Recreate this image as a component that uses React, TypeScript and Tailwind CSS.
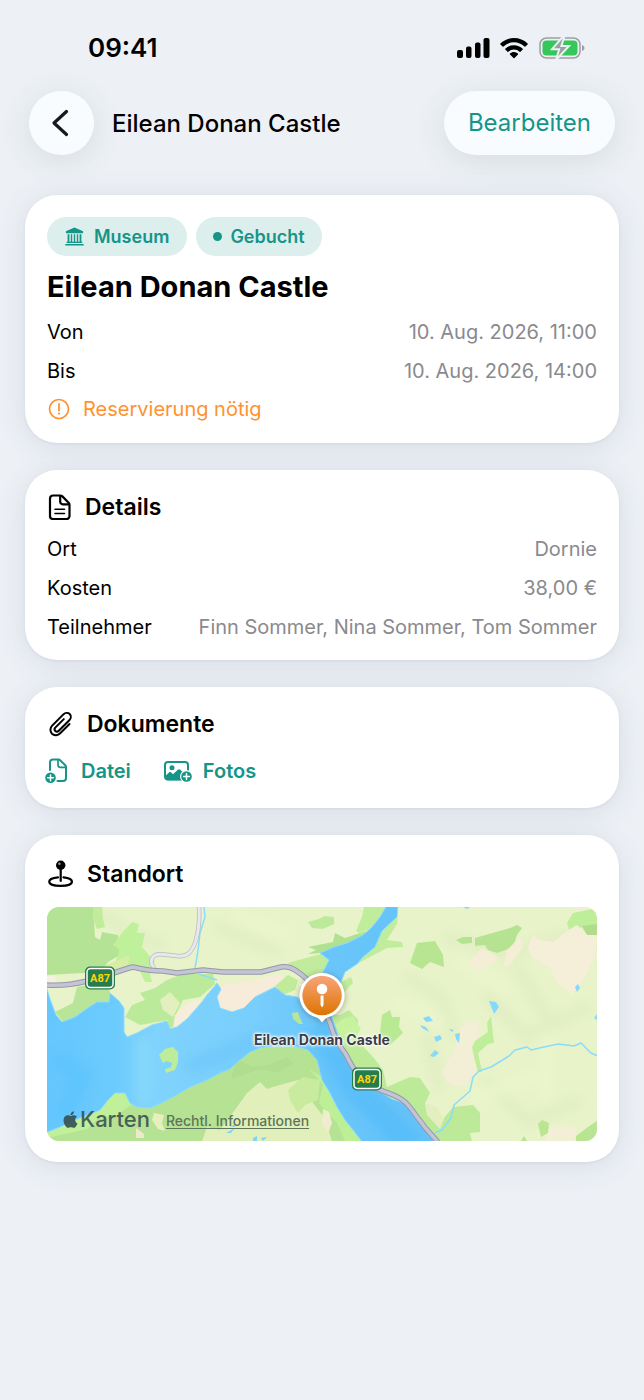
import type { ReactNode } from "react";
import { FaApple } from "react-icons/fa";

function Card({ className, children }: { className: string; children: ReactNode }) {
  return (
    <section
      className={`rounded-[32px] bg-white px-[22px] shadow-[0_4px_30px_rgba(70,80,100,0.12),0_1px_3px_rgba(110,140,190,0.14)] ${className}`}
    >
      {children}
    </section>
  );
}

function CardTitle({ icon, children }: { icon: ReactNode; children: ReactNode }) {
  return (
    <h2 className="flex h-[30px] items-center gap-3 text-[23px] font-semibold">
      {icon}
      {children}
    </h2>
  );
}

function Row({ label, value }: { label: string; value: string }) {
  return (
    <div className="flex h-[39px] items-center justify-between gap-4">
      <dt>{label}</dt>
      <dd className="text-right text-[#8a8a8e]">{value}</dd>
    </div>
  );
}

function StatusBar() {
  return (
    <div className="flex h-[91px] items-center justify-between pt-1 pr-[59px] pl-[88px]">
      <time className="text-[26px] font-semibold">09:41</time>
      <div className="flex items-center gap-[9px]">
        <svg width="34" height="22" viewBox="0 0 34 22" aria-hidden="true">
          <rect x="0" y="13" width="6" height="8" rx="2" />
          <rect x="9" y="9.500" width="5.500" height="11.500" rx="2" />
          <rect x="18" y="5.500" width="5.500" height="15.500" rx="2" />
          <rect x="26.500" y="1" width="6" height="20" rx="2" />
        </svg>
        <svg width="28" height="22" viewBox="0 0 28 22" aria-hidden="true">
          <path d="M14 1C8.700 1 3.900 3.100.4 6.500a.6.6 0 0 0 0 .9L2.600 9.500a.6.6 0 0 0 .9 0A15.200 15.200 0 0 1 14 5.300c4 0 7.700 1.600 10.500 4.200a.6.6 0 0 0 .9 0l2.200-2.100a.6.6 0 0 0 0-.9A19.600 19.600 0 0 0 14 1Z" />
          <path d="M14 8.200a12.500 12.500 0 0 0-8.700 3.500.6.6 0 0 0 0 .9l2.200 2.100a.6.6 0 0 0 .9 0 8.200 8.200 0 0 1 11.200 0 .6.6 0 0 0 .9 0l2.200-2.100a.6.6 0 0 0 0-.9A12.500 12.500 0 0 0 14 8.200Z" />
          <path d="M14 14.900c-1.600 0-3 .6-4 1.600a.6.6 0 0 0 0 .9l3.500 3.500a.7.700 0 0 0 1 0l3.500-3.500a.6.6 0 0 0 0-.9 5.800 5.800 0 0 0-4-1.600Z" />
        </svg>
        <svg className="ml-[2px]" width="46" height="22" viewBox="0 0 46 22" fill="none" aria-hidden="true">
          <rect x="1" y="1" width="40" height="20" rx="6.500" stroke="#9d9fa3" strokeWidth="1.500" />
          <path d="M43 8c3.300.9 3.300 5.200 0 6Z" fill="#9d9fa3" />
          <rect x="3.500" y="3.500" width="35" height="15" rx="4" fill="#35c759" />
          <path
            d="M24.500-1 13 12.200h7.200L17 23l13-14h-7.600L25.500-1Z"
            fill="#9d9fa3"
            stroke="#edf1f6"
            strokeWidth="2"
          />
        </svg>
      </div>
    </div>
  );
}

function MuseumIcon() {
  return (
    <svg width="19" height="19" viewBox="0 0 19 19" fill="currentColor" aria-hidden="true">
      <path d="M9.500.4.9 4.200v2h17.200v-2L9.500.4Z" />
      <path d="M2.600 7.200h1.800v7.800H2.600zM5.800 7.200h1.400v7.800H5.800zM8.800 7.200h1.400v7.800H8.800zM11.800 7.200h1.400v7.800h-1.400zM14.600 7.200h1.800v7.800h-1.800z" />
      <path d="M1.700 14.800h15.600V16H1.700zM.3 17h18.400v1.600H.3z" />
    </svg>
  );
}

function WarningIcon() {
  return (
    <svg width="24" height="24" viewBox="0 0 24 24" fill="none" stroke="currentColor" aria-hidden="true">
      <circle cx="12" cy="12" r="9.500" strokeWidth="1.700" />
      <path d="M12 7v6.500" strokeWidth="1.800" strokeLinecap="round" />
      <circle cx="12" cy="16.600" r="1.100" fill="currentColor" stroke="none" />
    </svg>
  );
}

function DocumentIcon() {
  return (
    <svg width="26" height="26" viewBox="0 0 26 26" fill="none" stroke="currentColor" strokeWidth="2.200" strokeLinejoin="round" aria-hidden="true">
      <path d="M6 1.500h7.200c.9 0 1.600.3 2.200.9l6.200 6.300c.6.6.9 1.300.9 2.200V22a3 3 0 0 1-3 3H6a3 3 0 0 1-3-3V4.500a3 3 0 0 1 3-3Z" />
      <path d="M13.200 1.800v6a2.500 2.500 0 0 0 2.500 2.500h6.500" />
      <path d="M8 15.200h9.500M8 19.500h9.500" strokeWidth="1.600" strokeLinecap="round" />
    </svg>
  );
}

function PaperclipIcon() {
  return (
    <svg width="28" height="28" viewBox="0 0 28 28" fill="none" stroke="currentColor" strokeWidth="2" strokeLinecap="round" aria-hidden="true">
      <path d="m22.500 14-9.300 9.300C11 25.500 7.300 26 5 23.800c-2.300-2.300-2-6 .2-8.200L16.400 4.400c1.700-1.700 4.600-2.100 6.300-.4s1.300 4.600-.4 6.300L11.800 20.800c-.9.900-2.500 1.200-3.500.2s-.8-2.600.2-3.600l8.300-8.300" />
    </svg>
  );
}

function PinBaseIcon() {
  return (
    <svg width="28" height="28" viewBox="0 0 28 28" fill="none" aria-hidden="true">
      <path d="M11 17.300c-5 .5-8.800 2.200-8.800 4.400 0 2.600 4.800 4.200 11.400 4.200S25 24.300 25 21.700c0-2.200-3.500-3.900-8.500-4.400" stroke="currentColor" strokeWidth="2.200" strokeLinecap="round" />
      <path d="M13.700 9v12" stroke="currentColor" strokeWidth="2.200" strokeLinecap="round" />
      <circle cx="13.700" cy="5.200" r="4.700" fill="currentColor" />
      <circle cx="12.400" cy="3.700" r="1.200" fill="#999" />
    </svg>
  );
}

function FileAddIcon() {
  return (
    <svg width="24" height="26" viewBox="0 0 24 26" fill="none" stroke="currentColor" strokeWidth="2" strokeLinejoin="round" strokeLinecap="round" aria-hidden="true">
      <path d="M5 12V4.500a3 3 0 0 1 3-3h5.500c.6 0 1.200.2 1.600.7l5.200 5.100c.5.500.7 1 .7 1.700V20a3 3 0 0 1-3 3h-5.500" />
      <path d="M13 2v5a2.300 2.300 0 0 0 2.300 2.300H20.500" strokeWidth="1.700" />
      <circle cx="5.500" cy="19.800" r="5.300" fill="currentColor" stroke="none" />
      <path d="M5.500 16.900v5.800M2.600 19.800h5.800" stroke="#fff" strokeWidth="1.500" />
    </svg>
  );
}

function PhotoAddIcon() {
  return (
    <svg width="30" height="24" viewBox="0 0 30 24" fill="none" aria-hidden="true">
      <rect x="2" y="3" width="23" height="17.500" rx="3" stroke="currentColor" strokeWidth="2" />
      <path d="M2 17.200 6 13.500c.7-.6 1.500-.6 2.200 0l1.800 1.700 4.800-4.500c.8-.7 1.700-.7 2.500 0l3.700 3.500-2 7H4Z" fill="currentColor" />
      <circle cx="9" cy="8.700" r="2.500" fill="currentColor" />
      <circle cx="23.500" cy="17.500" r="6.500" fill="#fff" />
      <circle cx="23.500" cy="17.500" r="5.300" fill="currentColor" />
      <path d="M23.500 14.600v5.800M20.600 17.500h5.800" stroke="#fff" strokeWidth="1.500" strokeLinecap="round" />
    </svg>
  );
}

function RoadSign({ x, y }: { x: number; y: number }) {
  return (
    <g transform={`translate(${x} ${y})`}>
      <rect x="-15" y="-11.500" width="30" height="23" rx="5" fill="#267c4b" />
      <rect x="-13" y="-9.500" width="26" height="19" rx="3.500" fill="#267c4b" stroke="#fff" strokeWidth="1.500" />
      <text y="4" textAnchor="middle" fill="#ffd60a" className="font-['Roboto',sans-serif] text-[11px] font-bold">
        A87
      </text>
    </g>
  );
}

const mainRoad =
  "M0 78c14 1 28-1 40-4 18-4 30-10 46-14 12 3 18 4 30 4l14 2 26-3 20 2h38l20-5c6-1 10 0 14 3 9 6 15 10 22 26l13 27c4 13 6 18 15 30 5 8 5 12 11 18 10 12 18 18 27 20 10 4 15 5 22 11 10 9 10 16 32 39";
const sideRoad =
  "M152 0c1 18-1 26-3 33-4 13-9 17-19 16-12-1-20-4-24 1-3 4-2 7 1 11";
const water =
  "M-2 82H0L3 92 6 100 9 108 15 115 28 110 42 100 50 95 62 95 63 86 72 94 77 101V125L80 130 90 126 105 118 120 114 123 122 130 120 140 112 148 103 155 95 160 88 167 80 170 76 174 82 170 90 173 101 185 105 197 101 208 90 228 80 238 88 250 90 258 95 270 80 276 65 282 53 273 46 287 40 300 36 316 28 325 20 333 10 340-2H351L350 10 335 24 328 40 316 50 310 57 298 65 294 75 288 95 285 110 290 125 298 146 306 160 320 177 335 186 345 192 360 197 368 206 376 218 388 236H316L306 223 298 213 290 200 283 186 275 173 270 153 261 143 246 139 226 139 213 141 203 145 193 153 183 162 173 166 160 173 143 180 126 190 110 198 103 201 90 200 83 196 78 186H68L61 193 53 203 33 211 13 220-2 226Z";

function MapArt() {
  return (
    <svg className="absolute inset-0 h-full w-full" viewBox="0 0 550 234" preserveAspectRatio="xMidYMid slice" aria-hidden="true">
      <defs>
        <linearGradient id="water" x1="0" y1="0" x2="550" y2="0" gradientUnits="userSpaceOnUse">
          <stop offset="0" stopColor="#65c7fd" />
          <stop offset=".12" stopColor="#6ccbfd" />
          <stop offset=".2" stopColor="#7fd3fc" />
          <stop offset=".38" stopColor="#78cefc" />
          <stop offset=".5" stopColor="#6ac6fa" />
          <stop offset="1" stopColor="#5abdf8" />
        </linearGradient>
        <filter id="soft" x="-30%" y="-30%" width="160%" height="160%">
          <feGaussianBlur stdDeviation="6" />
        </filter>
        <clipPath id="loch">
          <path d={water} />
        </clipPath>
      </defs>
      <rect width="550" height="234" fill="#e8f3c9" />

      {/* hill shading */}
      <g filter="url(#soft)" fill="none" strokeLinecap="round">
        <path d="M55 8c25 12 30 25 60 28M170 20l60 25M360 70l35 20 10 35M400 30l60 18 60-20M440 90l40 40 60-30M380 130l12 50M440 175l40 40 50-20M470 60l30 50" stroke="#dae7ba" strokeWidth="10" opacity=".6" />
        <path d="M190 8l50 20M350 95l45 20M415 55l45 28M430 190l60-20M500 130v60" stroke="#eef8cf" strokeWidth="10" opacity=".8" />
      </g>

      {/* north shore */}
      <path d="M0 0H46L48 30 53 33 55 25 71 28 73 48 61 55 55 65 36 66 0 68Z" fill="#b5e395" />
      <path d="M46 0H55L56 12 58 20 50 22 46 12Z" fill="#c0ec9c" />
      <path d="M85 15 92 17 90 26 98 26 95 40 108 55 102 62 105 75 98 75 92 62 80 60 68 55 73 43 66 38 75 26Z" fill="#bff09a" />
      <path d="M56 60 66 55 83 48 80 60 62 68Z" fill="#d7eda7" />
      <path d="M8 105 16 115 28 110 42 100 50 95 62 95 63 84 55 76 30 80 26 96Z" fill="#b8e598" />
      <path d="M0 69H8L9 74 0 76Z" fill="#f7efe0" />
      <path d="M120 73 136 67H166L168 77 153 90 136 93 128 110V120L121 121V113L93 118 78 110 85 98 98 93 93 86 108 81Z" fill="#bbeb9a" />
      <path d="M113 93 123 85 133 96 126 110 116 103Z" fill="#e4efbf" />
      <path d="M126 121 128 108 140 96 155 92 146 105 135 118Z" fill="#f6eeda" />
      <path d="M173 101 168 90 173 79 206 73 233 67 236 72 228 80 208 91 197 101 185 105Z" fill="#f6ecd9" />
      <path d="M228 79 241 68 251 73 248 83 236 88Z" fill="#c0ec9a" />
      <path d="M241 56 281 45 283 55 276 65 266 70 256 72 251 65Z" fill="#c2ec9d" />
      <path d="M252 77 261 76 262 84 256 83Z" fill="#fff8eb" />
      <path d="M261 15 272 12 278 9 287 10V17L276 22 265 21Z" fill="#bdea9a" />
      <path d="M261 40 286 35 288 26 298 31 316 25 326 26 318 33 296 41 273 46 261 47 269 43Z" fill="#b0e191" />
      <path d="M317 0H341L325 20 314 27 309 24 315 10Z" fill="#c0ed9c" />
      <path d="M351 10 350 17 340 33 355 35 356 40 340 41 323 50 308 58 328 36 336 23Z" fill="#c0ed9c" />
      <path d="M294 75 304 70 306 76 298 84 290 96Z" fill="#c0ed9c" />

      {/* south shore */}
      <path d="M0 200 100 180 180 140H270L330 234H0Z" fill="#b6e294" />
      <path d="M50 180H84V198L70 208 50 212 40 222 0 231V216Z" fill="#c1f09a" />
      <path d="M155 234 160 220 173 223 190 200 200 186 213 175 220 182 226 180 240 176 256 172 266 196 277 210 285 234Z" fill="#e1f0ba" />
      <path d="M241 183 256 170 273 173 271 193 258 198 251 206 243 193Z" fill="#c8eb9e" />
      <path d="M107 206 117 208 115 216 118 224 111 222 105 213Z" fill="#e7efbd" />
      <path d="M89 221 97 227V231H89Z" fill="#efe9cc" />
      <path d="M262 162 276 170 292 200 316 234H298L290 216 272 196 276 178Z" fill="#bdf096" />
      <path d="M276 202 282 205 285 216 281 226 275 217Z" fill="#f0ecd0" />
      <path d="M183 219 190 217 187 220ZM179 226 188 221 184 226ZM206 231 210 229V234H206ZM214 231 220 230 216 234Z" fill="#7dd3fb" />
      <path d="M190 152 205 160 222 158 240 150 246 156 232 165 212 162 196 168 184 172Z" fill="#a9d88a" opacity=".5" />

      {/* woods east of the road */}
      <path d="M284 108 293 108 302 103 311 113 310 133 326 150 336 163 340 180 363 170 373 171 383 186 378 196 380 206 393 216 406 200 426 198 433 206V225L423 226 425 234H388L376 218 355 196 330 184 300 150Z" fill="#bdea99" />
      <path d="M296 112 306 109 314 122 306 133 294 128 288 118Z" fill="#c7f39e" />
      <path d="M378 196 390 200 397 212 393 222 380 208Z" fill="#e4efbf" />

      {/* loch and river mouth */}
      <path d={water} fill="url(#water)" stroke="#8adbfd" strokeWidth="1" />
      <g clipPath="url(#loch)">
        <g filter="url(#soft)" fill="none" opacity=".5">
          <path d="M96 130v70" stroke="#97defc" strokeWidth="16" />
          <path d="M140 160l40-14 50-20" stroke="#66c3f8" strokeWidth="14" />
          <path d="M272 120l34 60 60 60" stroke="#4eb8f8" strokeWidth="24" />
          <path d="M10 150l25 20-20 40" stroke="#56c0fc" strokeWidth="18" />
        </g>
      </g>
      <path d="M112 148 118 142 126 140 131 145V155L128 163 119 166 118 162 124 160 125 156 120 154 116 156Z" fill="#bdec9b" />
      <path d="M245 106 251 105 253 111 256 117 252 117 246 112Z" fill="#b7e694" />

      {/* eastern hills */}
      <path d="M335 108 343 103 345 110H353L352 120 356 126 343 138 333 132V126Z" fill="#b9e993" />
      <path d="M363 56 370 36 388 34 396 48 397 60 383 55 375 62Z" fill="#b7e591" />
      <path d="M409 33 416 30H425V36L415 37Z" fill="#b5e392" />
      <path d="M428 31 463 21 470 18 475 21 470 28 466 40 450 46 441 43 438 38 428 39Z" fill="#b5e392" />
      <path d="M520 16 526 6 550 1V30L540 28 535 20 523 26Z" fill="#bfee9a" />
      <path d="M535 19 550 17V30L540 28Z" fill="#b0dc8c" />
      <path d="M483 48 481 40 486 28 492 33 506 35 520 24 530 18 540 28H550L548 50 536 73 525 88 510 76 503 61 486 51Z" fill="#f5efda" />
      <path d="M421 56 435 41 444 46 451 51 450 55 440 58 431 66Z" fill="#f3eed5" />
      <path d="M456 60 460 43 473 30 476 40 463 58Z" fill="#f3eed5" />
      <path d="M413 121 421 114 431 115 433 126 426 140 430 163 420 178 410 180 400 175 395 165 401 153 408 143Z" fill="#f3eed6" />
      <path d="M425 140 428 134 441 125 440 116 444 109 447 136 441 137 431 146 435 165H431L427 150Z" fill="#bfee9a" />
      <path d="M491 217 495 213 502 216 501 226 494 230Z" fill="#b9e692" />
      <path d="M503 220 512 218 526 220 530 228 524 234H498Z" fill="#f3eed6" />
      <path d="M529 229 541 220 550 214V234H529ZM474 234 477 229 480 234Z" fill="#b7e592" />
      <path d="M525 0H550L535 3Z" fill="#f5ecd8" />

      <g fill="#84d9fd">
        <path d="m376 111 6-2 4 5-7 1ZM373 118l6 2 3 5-7-4ZM387 130l6-2 2 4-6 3ZM383 149l5-6 4 3-5 4ZM408 127l5-1-1 10-3-4ZM402 122l5 1-2 2ZM442 94l7 1 3 5-5 7ZM528 80l3-3 2 4-3 4ZM416 0h7l-3 2ZM547 111l3-4v6Z" />
      </g>
      <g fill="none" stroke="#8bdcfa" strokeLinejoin="round">
        <path d="M157 0l1 10-5 16-2 18-3 17M152 67l18 6" strokeWidth="1.500" />
        <path d="M388 226l7-3 9-12 3-13 16-14 3-14 6-6 12-4 10-6 8-5 6-6 12-3 4 3 13-3 14-3 16 2 7-3 10 10 9 4 8 6" strokeWidth="1.500" />
      </g>

      <g fill="none" strokeLinecap="round" strokeLinejoin="round">
        <path d={sideRoad} stroke="#b9bac4" strokeWidth="4.500" />
        <path d={sideRoad} stroke="#e7e8ec" strokeWidth="3" />
        <path d={mainRoad} stroke="#9698a8" strokeWidth="5.500" />
        <path d={mainRoad} stroke="#c3c5d5" strokeWidth="3.500" />
      </g>
      <RoadSign x={53} y={71} />
      <RoadSign x={320} y={172} />
    </svg>
  );
}

function MapPin() {
  return (
    <svg width="50" height="54" viewBox="0 0 50 54" className="drop-shadow-[0_1px_3px_rgba(60,60,60,0.4)]" aria-hidden="true">
      <defs>
        <linearGradient id="pin" x1="0" y1="0" x2="0" y2="1">
          <stop offset="0" stopColor="#f8a57a" />
          <stop offset="1" stopColor="#de7400" />
        </linearGradient>
      </defs>
      <path d="M25 2a22.500 22.500 0 0 0-6 44.200c2.500.7 3.500 2.300 6 5.300 2.500-3 3.500-4.600 6-5.300A22.500 22.500 0 0 0 25 2Z" fill="#fff" />
      <circle cx="25" cy="24.500" r="19.700" fill="url(#pin)" />
      <circle cx="25" cy="18" r="5.300" fill="#fff" />
      <path d="M23.500 24.500h3V34l-1.500 2.500-1.500-2.500Z" fill="#fff" />
    </svg>
  );
}

export default function App() {
  return (
    <main className="min-h-screen bg-[#edf1f6] font-['Inter',sans-serif] text-black">
      <StatusBar />

      <header className="flex items-center gap-[18px] px-[29px]">
        <button
          type="button"
          aria-label="Zurück"
          className="flex h-16 w-[65px] shrink-0 items-center justify-center rounded-full bg-[#f9fcff] pr-[2px] shadow-[0_6px_32px_rgba(60,75,75,0.12)]"
        >
          <svg width="22" height="30" viewBox="0 0 22 30" fill="none" stroke="#16191d" strokeWidth="3.200" strokeLinecap="round" strokeLinejoin="round" aria-hidden="true">
            <path d="M16.500 3.500 4 15l12.500 11.500" />
          </svg>
        </button>
        <h1 className="flex-1 pt-[2px] text-2xl font-medium">Eilean Donan Castle</h1>
        <button
          type="button"
          className="h-16 shrink-0 rounded-full bg-[#f9fcff] px-6 text-2xl text-[#159588] shadow-[0_6px_32px_rgba(60,75,75,0.12)]"
        >
          Bearbeiten
        </button>
      </header>

      <div className="flex flex-col gap-[27px] px-[25px] pt-10 pb-12 text-xl">
        <Card className="pt-[22px] pb-[15px]">
          <div className="flex gap-[9px] text-lg font-semibold text-[#159588]">
            <span className="flex h-[39px] items-center gap-[10px] rounded-full bg-[#dcefed] px-[18px]">
              <MuseumIcon />
              Museum
            </span>
            <span className="flex h-[39px] items-center gap-2 rounded-full bg-[#dcefed] px-[17px]">
              <span className="size-[9px] rounded-full bg-[#159588]" />
              Gebucht
            </span>
          </div>
          <h2 className="flex h-14 items-center pt-[7px] text-[29px] font-bold">Eilean Donan Castle</h2>
          <dl>
            <Row label="Von" value="10. Aug. 2026, 11:00" />
            <Row label="Bis" value="10. Aug. 2026, 14:00" />
          </dl>
          <p className="flex h-[38px] items-center gap-3 text-[#ff9230]">
            <WarningIcon />
            Reservierung nötig
          </p>
        </Card>

        <Card className="pt-[22px] pb-[14px]">
          <CardTitle icon={<DocumentIcon />}>Details</CardTitle>
          <dl className="pt-[7px]">
            <Row label="Ort" value="Dornie" />
            <Row label="Kosten" value="38,00 €" />
            <Row label="Teilnehmer" value="Finn Sommer, Nina Sommer, Tom Sommer" />
          </dl>
        </Card>

        <Card className="pt-[22px] pb-[17px]">
          <CardTitle icon={<PaperclipIcon />}>Dokumente</CardTitle>
          <div className="flex gap-8 pt-3 font-semibold text-[#159588]">
            <button type="button" className="-ml-[2px] flex h-10 items-center gap-3">
              <FileAddIcon />
              Datei
            </button>
            <button type="button" className="flex h-10 items-center gap-[10px]">
              <PhotoAddIcon />
              Fotos
            </button>
          </div>
        </Card>

        <Card className="pt-6 pb-[21px]">
          <CardTitle icon={<PinBaseIcon />}>Standort</CardTitle>
          <div className="relative mt-[18px] h-[234px] overflow-hidden rounded-xl">
            <MapArt />
            <div className="absolute top-[64px] left-1/2 flex -translate-x-1/2 flex-col items-center">
              <MapPin />
              <span className="mt-[5px] text-sm font-bold whitespace-nowrap text-[#3b3d45] [text-shadow:0_0_2px_#fff,0_0_2px_#fff,0_0_3px_#fff,0_0_4px_#fff]">
                Eilean Donan Castle
              </span>
            </div>
            <div className="absolute bottom-[6px] left-[14px] flex items-center gap-4">
              <span className="flex items-center text-[22px] font-medium text-[#354f50]/90">
                <FaApple className="size-[19px]" aria-hidden="true" />
                Karten
              </span>
              <a href="#rechtliches" className="pt-[2px] text-sm font-medium text-[#5d7558] underline underline-offset-2">
                Rechtl. Informationen
              </a>
            </div>
          </div>
        </Card>
      </div>
    </main>
  );
}
